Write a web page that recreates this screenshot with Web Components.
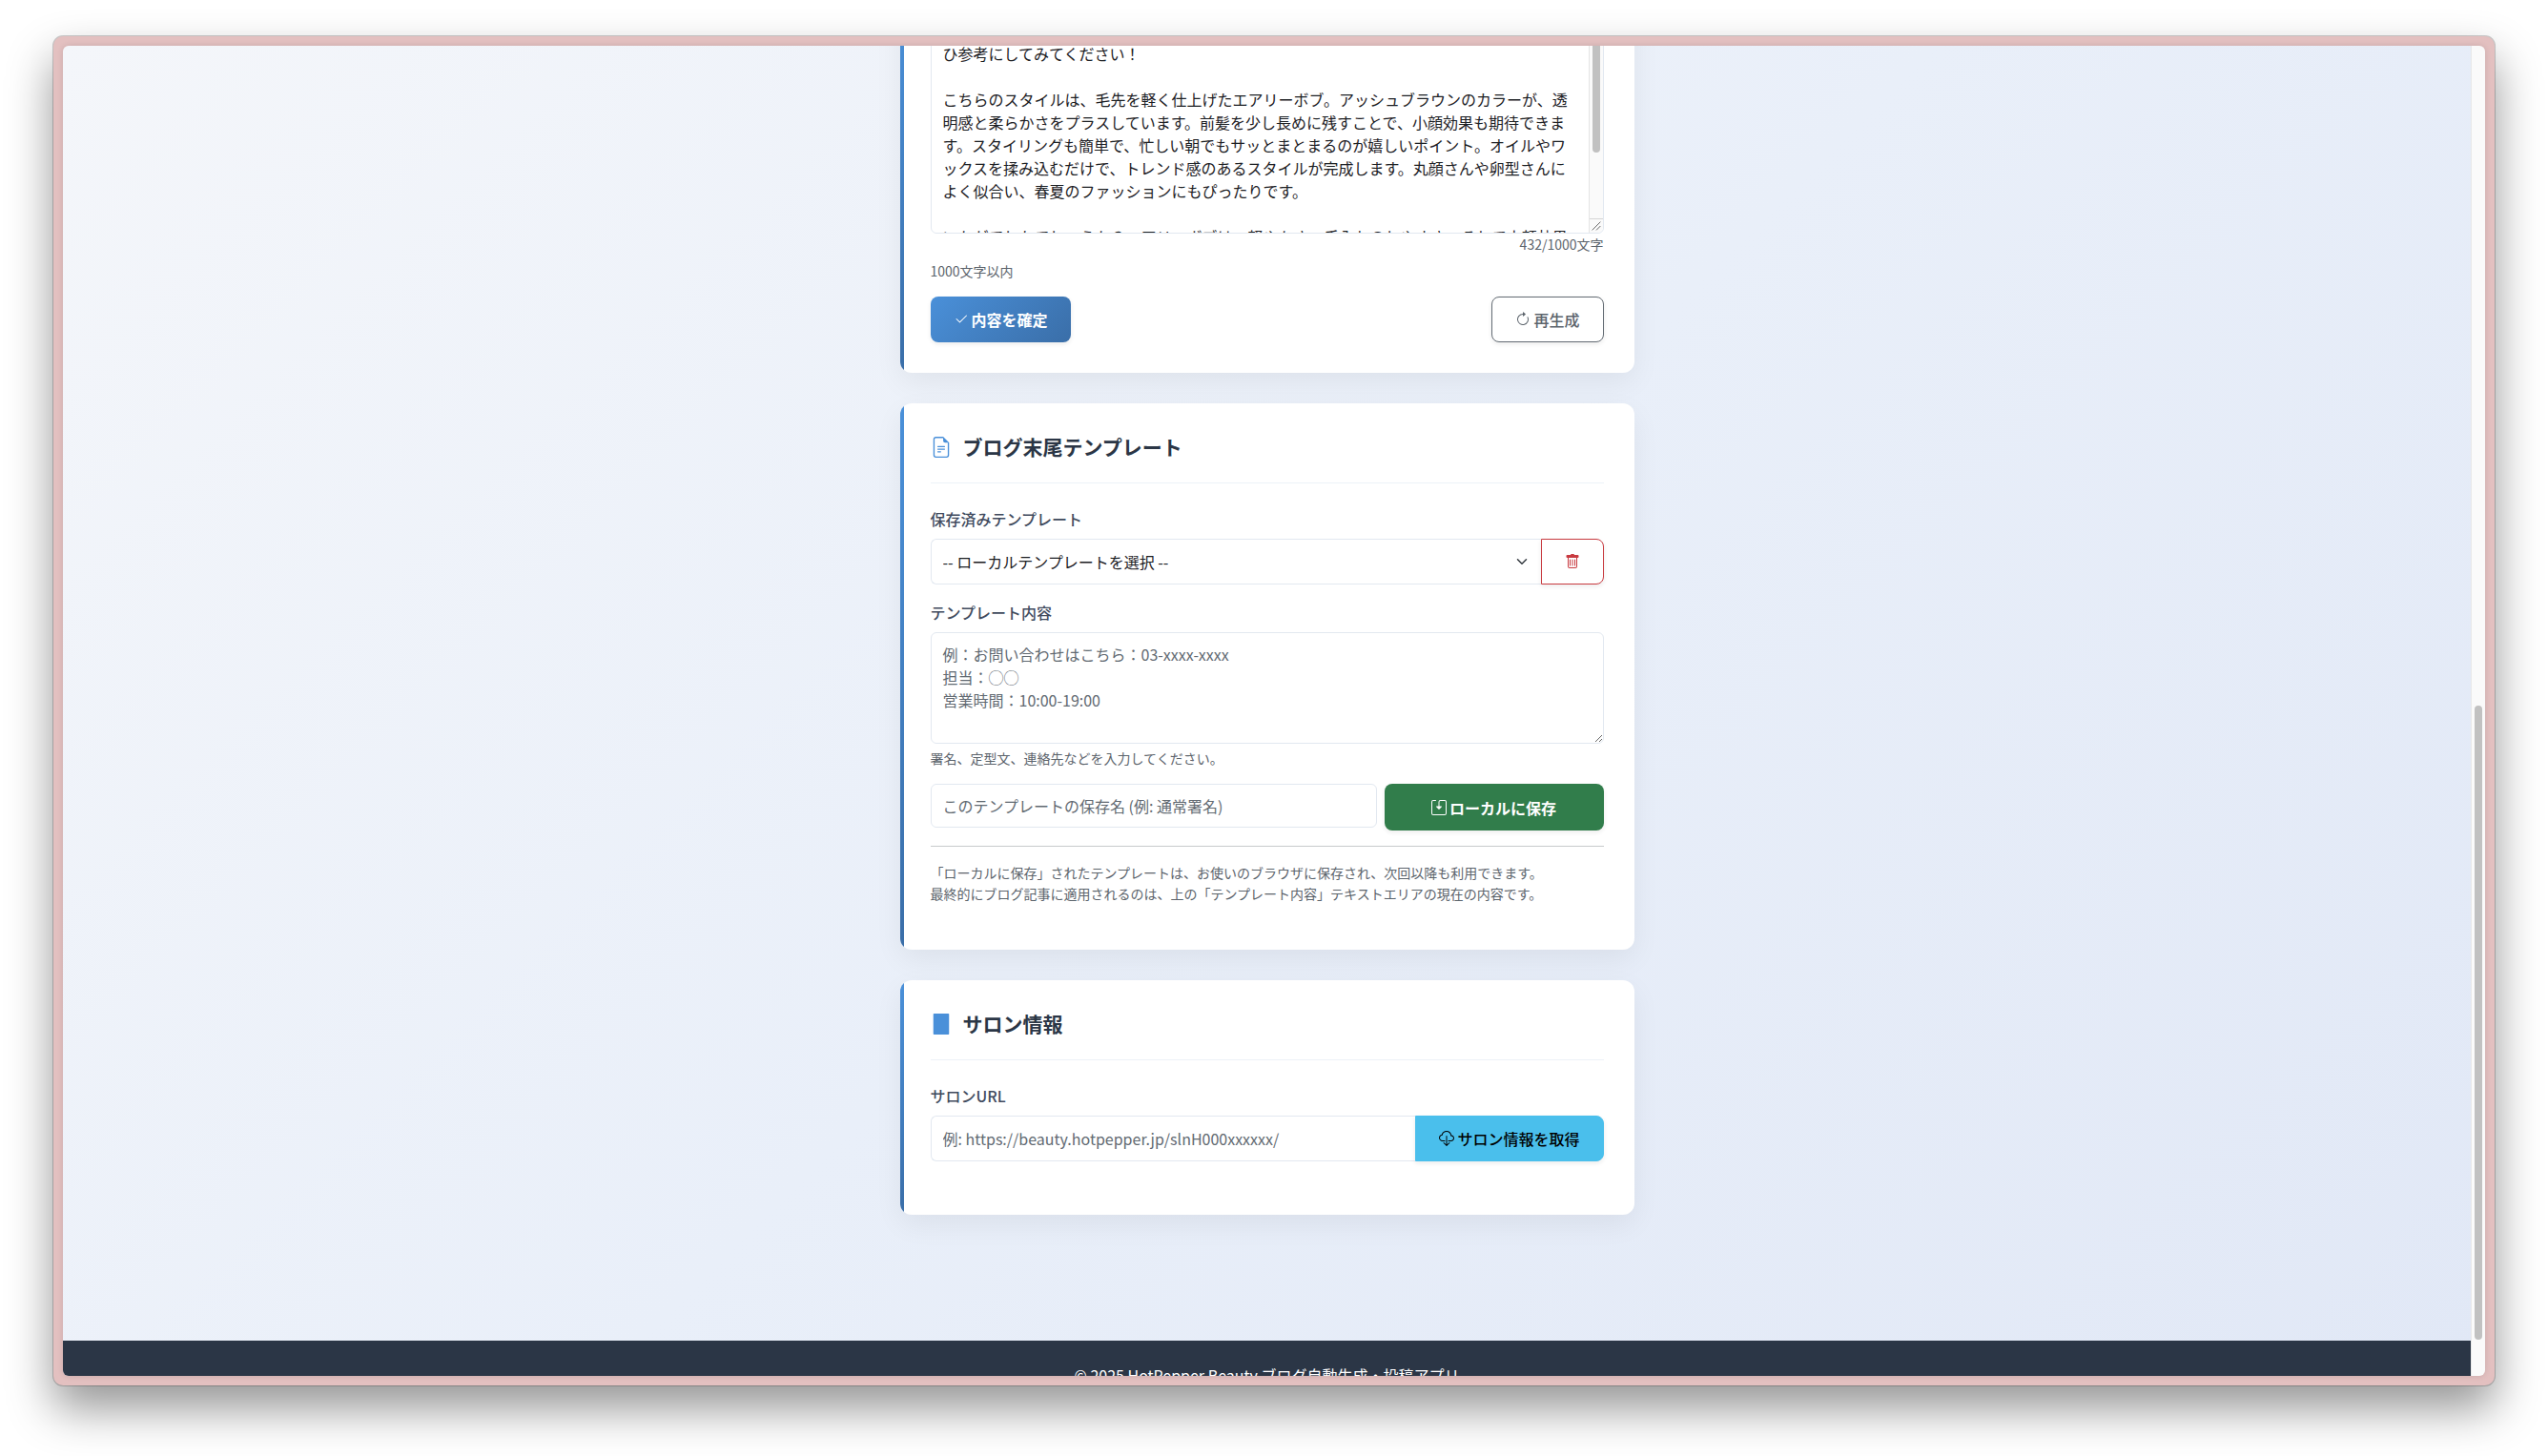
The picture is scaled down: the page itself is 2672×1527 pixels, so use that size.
<!DOCTYPE html>
<html lang="ja">
<head>
<meta charset="utf-8">
<title>HotPepper Beauty ブログ自動生成・投稿アプリ</title>
<style>
  html, body { height: 100%; }
  body {
    margin: 0;
    background: #fff;
    color: #212529;
    font: 16px/24px "Noto Sans CJK JP", sans-serif;
  }
</style>
</head>
<body>
<app-window>
  <card-stack>
    <content-form></content-form>
    <template-form></template-form>
    <salon-form></salon-form>
  </card-stack>
  <page-footer slot="footer">© 2025 HotPepper Beauty ブログ自動生成・投稿アプリ</page-footer>
</app-window>

<script>
const ICONS = {
  check: '<path d="M13.854 3.646a.5.5 0 0 1 0 .708l-7 7a.5.5 0 0 1-.708 0l-3.5-3.500a.5.5 0 1 1 .708-.708L6.500 10.293l6.646-6.647a.5.5 0 0 1 .708 0z"/>',
  refresh: '<path fill-rule="evenodd" d="M8 3a5 5 0 1 0 4.546 2.914.5.5 0 0 1 .908-.417A6 6 0 1 1 8 2v1z"/><path d="M8 4.466V.534a.25.25 0 0 1 .41-.192l2.360 1.966c.12.1.12.284 0 .384L8.410 4.658A.25.25 0 0 1 8 4.466z"/>',
  file: '<path d="M5.500 7a.5.5 0 0 0 0 1h5a.5.5 0 0 0 0-1h-5zM5 9.500a.5.5 0 0 1 .5-.5h5a.5.5 0 0 1 0 1h-5a.5.5 0 0 1-.5-.5zm0 2a.5.5 0 0 1 .5-.5h2a.5.5 0 0 1 0 1h-2a.5.5 0 0 1-.5-.5z"/><path d="M9.500 0H4a2 2 0 0 0-2 2v12a2 2 0 0 0 2 2h8a2 2 0 0 0 2-2V4.500L9.500 0zm0 1v2A1.500 1.500 0 0 0 11 4.500h2V14a1 1 0 0 1-1 1H4a1 1 0 0 1-1-1V2a1 1 0 0 1 1-1h5.500z"/>',
  building: '<rect x="2" y="0" width="12" height="16" rx=".6"/>',
  trash: '<path d="M5.500 5.500A.5.5 0 0 1 6 6v6a.5.5 0 0 1-1 0V6a.5.5 0 0 1 .5-.5zm2.500 0a.5.5 0 0 1 .5.5v6a.5.5 0 0 1-1 0V6a.5.5 0 0 1 .5-.5zm3 .5a.5.5 0 0 0-1 0v6a.5.5 0 0 0 1 0V6z"/><path fill-rule="evenodd" d="M14.500 3a1 1 0 0 1-1 1H13v9a2 2 0 0 1-2 2H5a2 2 0 0 1-2-2V4h-.5a1 1 0 0 1-1-1V2a1 1 0 0 1 1-1H6a1 1 0 0 1 1-1h2a1 1 0 0 1 1 1h3.500a1 1 0 0 1 1 1v1zM4.118 4 4 4.059V13a1 1 0 0 0 1 1h6a1 1 0 0 0 1-1V4.059L11.882 4H4.118z"/>',
  save: '<path d="M2 1a1 1 0 0 0-1 1v12a1 1 0 0 0 1 1h12a1 1 0 0 0 1-1V2a1 1 0 0 0-1-1H9.500a1 1 0 0 0-1 1v4.500h2a.5.5 0 0 1 .354.854l-2.500 2.500a.5.5 0 0 1-.708 0l-2.500-2.500A.5.5 0 0 1 5.500 6.500h2V2a2 2 0 0 1 2-2H14a2 2 0 0 1 2 2v12a2 2 0 0 1-2 2H2a2 2 0 0 1-2-2V2a2 2 0 0 1 2-2h2.500a.5.5 0 0 1 0 1H2z"/>',
  cloud: '<path d="M4.406 1.342A5.530 5.530 0 0 1 8 0c2.690 0 4.923 2 5.166 4.579C14.758 4.804 16 6.137 16 7.773 16 9.569 14.502 11 12.687 11H10a.5.5 0 0 1 0-1h2.688C13.979 10 15 8.988 15 7.773c0-1.216-1.020-2.228-2.313-2.228h-.5v-.5C12.188 2.825 10.328 1 8 1a4.530 4.530 0 0 0-2.941 1.100c-.757.652-1.153 1.438-1.153 2.055v.448l-.445.049C2.064 4.805 1 5.952 1 7.318 1 8.785 2.230 10 3.781 10H6a.5.5 0 0 1 0 1H3.781C1.708 11 0 9.366 0 7.318c0-1.763 1.266-3.223 2.942-3.593.143-.863.698-1.723 1.464-2.383z"/><path d="M7.646 15.854a.5.5 0 0 0 .708 0l3-3a.5.5 0 0 0-.708-.708L8.500 14.293V5.500a.5.5 0 0 0-1 0v8.793l-2.146-2.147a.5.5 0 0 0-.708.708l3 3z"/>',
  chevron: '<path d="M2 5l6 6 6-6" fill="none" stroke="currentColor" stroke-width="2" stroke-linecap="round" stroke-linejoin="round"/>',
  grip: '<path d="M3 13 13 3M8 13l5-5" fill="none" stroke="currentColor" stroke-width="1"/>'
};

const define = (name, css, html, connect) => {
  customElements.define(name, class extends HTMLElement {
    constructor() {
      super();
      const root = this.attachShadow({ mode: 'open' });
      const t = document.createElement('template');
      t.innerHTML = `<style>:host,*{box-sizing:border-box}${css}</style>${html}`;
      root.append(t.content.cloneNode(true));
    }
    connectedCallback() { if (connect) connect(this, this.shadowRoot); }
  });
};

/* Styles shared by the three forms */
const FORM = `
  :host { display: block; }
  .field { display: flex; flex-direction: column; }
  label { font-weight: 500; line-height: 26px; color: #414b5e; margin-bottom: 8px; }
  input, textarea, select {
    font: inherit; color: #1c2024; background: #fff; width: 100%; min-width: 0; margin: 0;
    border: 1px solid #e2e8f0; border-radius: 6px; padding: 10px 12px; outline: 0; display: block;
  }
  ::placeholder { color: #626a72; opacity: 1; }
  .row { display: flex; }
  .help { font-size: 14px; line-height: 22px; color: #5c646c; margin: 0; }
`;

define('ui-icon', `:host{display:inline-flex;flex:none;width:16px;height:16px}svg{width:100%;height:100%}`,
  `<svg viewBox="0 0 16 16" fill="currentColor" aria-hidden="true"></svg>`,
  (el, root) => { root.querySelector('svg').innerHTML = ICONS[el.getAttribute('name')]; });

define('ui-button', `
  :host { display: block; flex: none; }
  button {
    font: inherit; font-weight: 600; width: 100%; height: 48px; padding: 0 24px; margin: 0; cursor: pointer;
    display: flex; align-items: center; justify-content: center; gap: 3px;
    border: 0; border-radius: 8px; color: #fff; white-space: nowrap;
    box-shadow: 0 2px 5px rgba(0,0,0,.08);
  }
  :host([kind=primary]) button { background: linear-gradient(135deg, #4a90d9, #3a6ea8); }
  :host([kind=plain]) button { background: #fff; border: 1px solid #636b73; color: #5c646c; font-weight: 500; }
  :host([kind=danger]) button { background: #fff; border: 1px solid #c83a40; color: #c83a40; }
  :host([kind=success]) button { background: #317d4b; height: 49px; }
  :host([kind=info]) button { background: #4abfec; border: 1px solid #4abfec; color: #000; font-weight: 500; }
  :host([joined]) button { border-radius: 0 8px 8px 0; }
`, `<button type="button"><slot></slot></button>`,
  (el, root) => { if (el.title) root.querySelector('button').setAttribute('aria-label', el.title); });

define('section-card', `
  :host {
    display: block; border-radius: 12px; padding: 32px; overflow: hidden;
    background: linear-gradient(#4a90d9, #3a6ea8) left / 4px 100% no-repeat #fff;
    box-shadow: 0 10px 30px rgba(0,0,0,.06);
  }
  h2 {
    display: flex; align-items: center; gap: 12px; margin: 0 0 24px; padding-bottom: 24px;
    border-bottom: 1px solid #edf2f7; font-size: 21px; line-height: 27px; font-weight: 700; color: #2b3646;
  }
  h2 ui-icon { width: 22px; height: 22px; color: #4a90d9; }
`, `<slot></slot>`, (el, root) => {
  const title = el.getAttribute('heading');
  if (!title) return;
  const h2 = document.createElement('h2');
  h2.innerHTML = `<ui-icon name="${el.getAttribute('icon')}"></ui-icon><span>${title}</span>`;
  root.insertBefore(h2, root.querySelector('slot'));
});

define('content-form', FORM + `
  .editor { display: grid; }
  .editor > * { grid-area: 1 / 1; }
  textarea { height: 212px; resize: none; overflow: hidden; padding-right: 27px; }
  .bar {
    justify-self: end; width: 15px; margin: 1px; border-left: 1px solid #e5e5e5; background: #fafafa;
    display: flex; flex-direction: column; align-items: center; justify-content: space-between;
    border-radius: 0 6px 6px 0; pointer-events: none; z-index: 1;
  }
  .thumb { width: 8px; height: 126px; border-radius: 4px; background: #c1c1c1; }
  .corner { width: 14px; height: 15px; border-top: 1px solid #d5d5d5; display: flex; color: #555; }
  .corner ui-icon { width: 14px; height: 14px; }
  .count { text-align: right; }
  .help + .help { margin-top: 6px; }
  .row { justify-content: space-between; margin-top: 16px; }
`, `<section-card>
  <div class="editor">
    <textarea aria-label="ブログ本文"></textarea>
    <div class="bar"><div class="thumb"></div><div class="corner"><ui-icon name="grip"></ui-icon></div></div>
  </div>
  <p class="help count">432/1000文字</p>
  <p class="help">1000文字以内</p>
  <div class="row">
    <ui-button kind="primary"><ui-icon name="check"></ui-icon>内容を確定</ui-button>
    <ui-button kind="plain"><ui-icon name="refresh"></ui-icon>再生成</ui-button>
  </div>
</section-card>`, (el, root) => {
  root.querySelector('textarea').value = 'ひ参考にしてみてください！\n\nこちらのスタイルは、毛先を軽く仕上げたエアリーボブ。アッシュブラウンのカラーが、透明感と柔らかさをプラスしています。前髪を少し長めに残すことで、小顔効果も期待できます。スタイリングも簡単で、忙しい朝でもサッとまとまるのが嬉しいポイント。オイルやワックスを揉み込むだけで、トレンド感のあるスタイルが完成します。丸顔さんや卵型さんによく似合い、春夏のファッションにもぴったりです。\n\nいかがでしたでしょうか？エアリーボブは、軽やかさ、手入れのしやすさ、そして小顔効果';
});

define('template-form', FORM + `
  .select { display: grid; flex: 1; align-items: center; }
  .select > * { grid-area: 1 / 1; }
  select { appearance: none; height: 48px; border-radius: 6px 0 0 6px; border-right: 0; }
  .select ui-icon { width: 12px; height: 12px; justify-self: end; margin-right: 14px; pointer-events: none; color: #343a40; }
  .trash { width: 66px; }
  .field + .field { margin-top: 16px; }
  textarea { height: 117px; resize: both; }
  .field .help { margin-top: 4px; }
  .save { gap: 8px; margin-top: 16px; align-items: flex-start; }
  .save input { height: 46px; flex: 2; }
  .save ui-button { width: 230px; }
  hr { border: 0; border-top: 1px solid #c8cacc; margin: 16px 0; width: 100%; }
  .note { margin-bottom: 16px; }
`, `<section-card heading="ブログ末尾テンプレート" icon="file">
  <div class="field">
    <label for="saved">保存済みテンプレート</label>
    <div class="row">
      <div class="select">
        <select id="saved"><option>-- ローカルテンプレートを選択 --</option></select>
        <ui-icon name="chevron"></ui-icon>
      </div>
      <ui-button class="trash" kind="danger" joined title="削除"><ui-icon name="trash"></ui-icon></ui-button>
    </div>
  </div>
  <div class="field">
    <label for="body">テンプレート内容</label>
    <textarea id="body" placeholder="例：お問い合わせはこちら：03-xxxx-xxxx&#10;担当：◯◯&#10;営業時間：10:00-19:00"></textarea>
    <p class="help">署名、定型文、連絡先などを入力してください。</p>
  </div>
  <div class="row save">
    <input type="text" aria-label="保存名" placeholder="このテンプレートの保存名 (例: 通常署名)">
    <ui-button kind="success"><ui-icon name="save"></ui-icon>ローカルに保存</ui-button>
  </div>
  <hr>
  <p class="help note">「ローカルに保存」されたテンプレートは、お使いのブラウザに保存され、次回以降も利用できます。<br>最終的にブログ記事に適用されるのは、上の「テンプレート内容」テキストエリアの現在の内容です。</p>
</section-card>`);

define('salon-form', FORM + `
  input { height: 48px; flex: 1; border-radius: 6px 0 0 6px; border-right: 0; }
  .field { margin-bottom: 24px; }
`, `<section-card heading="サロン情報" icon="building">
  <div class="field">
    <label for="url">サロンURL</label>
    <div class="row">
      <input id="url" type="url" placeholder="例: https://beauty.hotpepper.jp/slnH000xxxxxx/">
      <ui-button kind="info" joined><ui-icon name="cloud"></ui-icon>サロン情報を取得</ui-button>
    </div>
  </div>
</section-card>`);

define('card-stack', `
  :host { display: flex; flex-direction: column; gap: 32px; width: 770px; max-width: 100%; margin: 0 auto; }
`, `<slot></slot>`);

define('page-footer', `
  :host { display: block; height: 37px; overflow: hidden; background: #2b3646; }
  p { margin: 0; padding-top: 24px; color: #fff; text-align: center; }
`, `<p><slot></slot></p>`);

/* Desktop backdrop, window frame, clipped page and its scrollbar */
define('app-window', `
  :host { display: flex; height: 100%; padding: 38px 56px 74px; overflow: hidden; }
  .frame {
    flex: 1; display: flex; min-width: 0; padding: 10px; border-radius: 10px; background: #e3c0c0;
    box-shadow: 0 0 0 1px rgba(0,0,0,.2), 0 24px 48px rgba(0,0,0,.42);
  }
  .view { flex: 1; display: flex; min-width: 0; border-radius: 6px; overflow: hidden; box-shadow: 0 0 6px rgba(0,0,0,.12); }
  .page { flex: 1; display: flex; flex-direction: column; min-width: 0; background: linear-gradient(135deg, #f4f6fa, #e9eff9 50%, #e1e8f6); }
  main { flex: 1; min-height: 0; overflow: hidden; display: flex; flex-direction: column; justify-content: flex-end; padding-bottom: 132px; }
  .bar { width: 15px; flex: none; background: #fafafa; border-left: 1px solid #e8e8e8; display: flex; flex-direction: column; align-items: center; justify-content: flex-end; padding-bottom: 38px; }
  .thumb { width: 8px; height: 49%; border-radius: 4px; background: #c1c1c1; }
`, `<div class="frame"><div class="view">
  <div class="page"><main><slot></slot></main><slot name="footer"></slot></div>
  <div class="bar"><div class="thumb"></div></div>
</div></div>`);
</script>
</body>
</html>
